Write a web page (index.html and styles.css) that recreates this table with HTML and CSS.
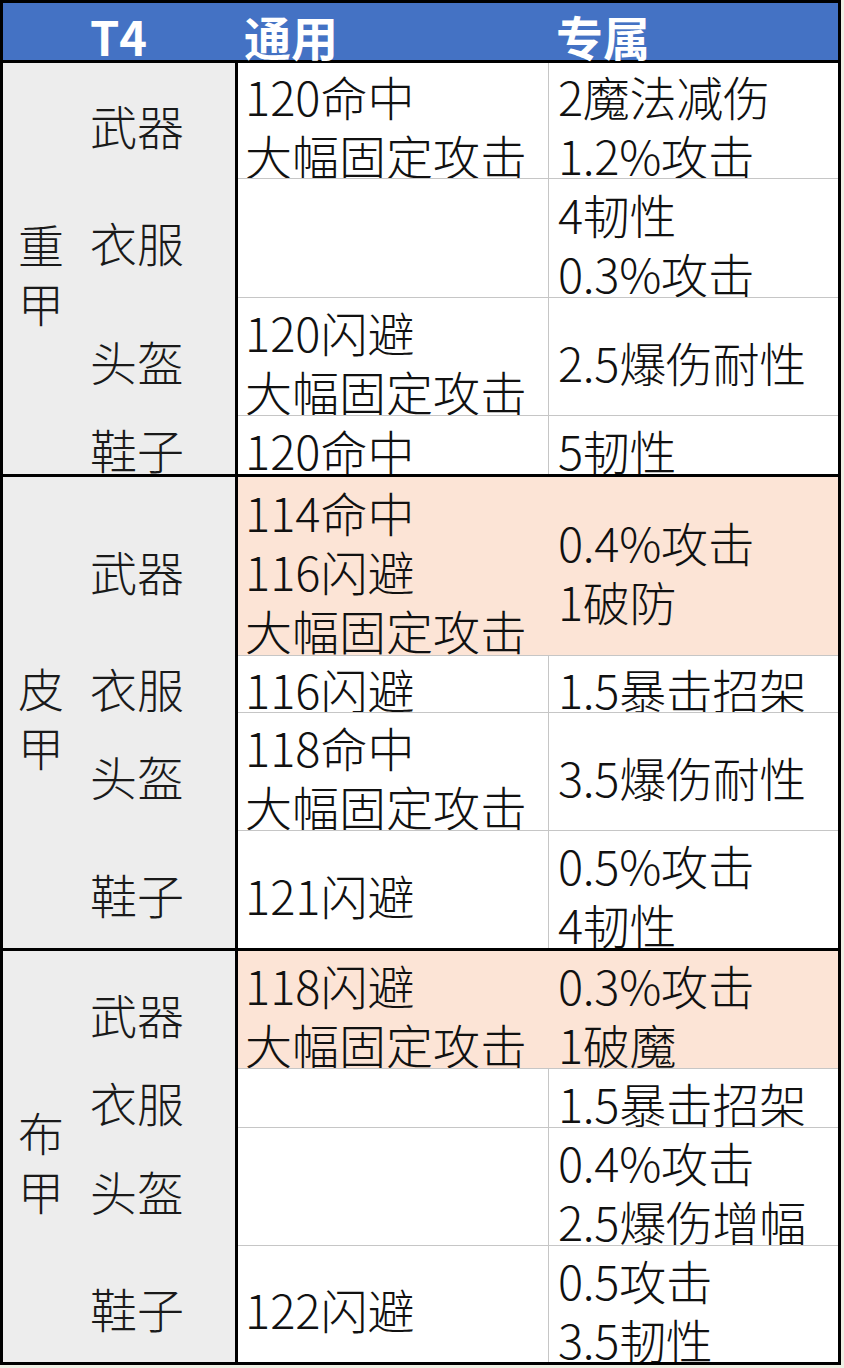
FILE: index.html
```html
<!DOCTYPE html>
<html lang="zh">
<head>
<meta charset="utf-8">
<title>T4</title>
<link rel="stylesheet" href="styles.css">
</head>
<body>
<div class="sheet">
  <div class="header">
    <div class="h h1">T4</div>
    <div class="h h2">通用</div>
    <div class="h h3">专属</div>
  </div>

  <div class="group g1">
    <div class="glabel"><span>重</span><span>甲</span></div>
    <div class="item">武器</div>
    <div class="cell c2 first"><span>120命中</span><span>大幅固定攻击</span></div>
    <div class="cell c3 first"><span>2魔法减伤</span><span>1.2%攻击</span></div>
    <div class="item">衣服</div>
    <div class="cell c2"></div>
    <div class="cell c3"><span>4韧性</span><span>0.3%攻击</span></div>
    <div class="item">头盔</div>
    <div class="cell c2"><span>120闪避</span><span>大幅固定攻击</span></div>
    <div class="cell c3"><span>2.5爆伤耐性</span></div>
    <div class="item">鞋子</div>
    <div class="cell c2"><span>120命中</span></div>
    <div class="cell c3"><span>5韧性</span></div>
  </div>

  <div class="group g2">
    <div class="glabel"><span>皮</span><span>甲</span></div>
    <div class="item">武器</div>
    <div class="cell c2 first hl"><span>114命中</span><span>116闪避</span><span>大幅固定攻击</span></div>
    <div class="cell c3 first hl"><span>0.4%攻击</span><span>1破防</span></div>
    <div class="item">衣服</div>
    <div class="cell c2"><span>116闪避</span></div>
    <div class="cell c3"><span>1.5暴击招架</span></div>
    <div class="item">头盔</div>
    <div class="cell c2"><span>118命中</span><span>大幅固定攻击</span></div>
    <div class="cell c3"><span>3.5爆伤耐性</span></div>
    <div class="item">鞋子</div>
    <div class="cell c2"><span>121闪避</span></div>
    <div class="cell c3"><span>0.5%攻击</span><span>4韧性</span></div>
  </div>

  <div class="group g3">
    <div class="glabel"><span>布</span><span>甲</span></div>
    <div class="item">武器</div>
    <div class="cell c2 first hl"><span>118闪避</span><span>大幅固定攻击</span></div>
    <div class="cell c3 first hl"><span>0.3%攻击</span><span>1破魔</span></div>
    <div class="item">衣服</div>
    <div class="cell c2"></div>
    <div class="cell c3"><span>1.5暴击招架</span></div>
    <div class="item">头盔</div>
    <div class="cell c2"></div>
    <div class="cell c3"><span>0.4%攻击</span><span>2.5爆伤增幅</span></div>
    <div class="item">鞋子</div>
    <div class="cell c2"><span>122闪避</span></div>
    <div class="cell c3"><span>0.5攻击</span><span>3.5韧性</span></div>
  </div>
</div>
</body>
</html>
```

FILE: styles.css
```css
html, body {
  margin: 0;
  padding: 0;
}
body {
  background: #eef0e4;
  font-family: "Noto Sans CJK SC Light", "Noto Sans CJK SC DemiLight", "Noto Sans CJK SC", "Noto Sans", sans-serif;
  color: #111;
}
.sheet {
  width: 841px;
  box-sizing: border-box;
  border: 3px solid #000;
  background: #fff;
}
.header {
  display: grid;
  grid-template-columns: 232px 313px 1fr;
  height: 60px;
  box-sizing: border-box;
  background: #4472c4;
  border-bottom: 3px solid #000;
}
.h {
  color: #fff;
  font-family: "Noto Sans CJK SC", "Noto Sans", sans-serif;
  font-weight: 700;
  font-size: 47px;
  line-height: 57px;
  padding-top: 4px;
  box-sizing: border-box;
  height: 57px;
}
.h1 { padding-left: 87px; }
.h2 { padding-left: 9px; }
.h3 { padding-left: 8px; }

.group {
  display: grid;
  grid-template-columns: 76px 159px 311px 1fr;
  border-bottom: 3px solid #000;
}
.g3 { border-bottom: none; }
.g1 { grid-template-rows: 115px 119px 118px 59px; }
.g2 { grid-template-rows: 178px 57px 118px 118px; }
.g3 { grid-template-rows: 117px 59px 118px 117px; }

.glabel {
  grid-column: 1;
  grid-row: 1 / -1;
  background: #ededed;
  display: flex;
  flex-direction: column;
  align-items: center;
  justify-content: center;
  padding-top: 8px;
  font-size: 46px;
  line-height: 59px;
  font-weight: 300;
  color: #1a1a1a;
}
.item {
  grid-column: 2;
  background: #ededed;
  border-right: 3px solid #000;
  box-sizing: border-box;
  display: flex;
  align-items: center;
  padding-left: 11px;
  padding-top: 8px;
  font-size: 47px;
  font-weight: 300;
  color: #1a1a1a;
}
.cell {
  box-sizing: border-box;
  display: flex;
  flex-direction: column;
  justify-content: center;
  overflow: hidden;
  padding-top: 9px;
  font-size: 47px;
  line-height: 59px;
  font-weight: 300;
  white-space: nowrap;
  border-top: 1px solid #c6c6c6;
}
.cell.first { border-top: none; }
.cell span { display: block; flex: none; }
.c2 {
  grid-column: 3;
  padding-left: 7px;
  border-right: 1px solid #c6c6c6;
}
.c3 {
  grid-column: 4;
  padding-left: 9px;
  letter-spacing: -0.3px;
}
.hl { background: #fce4d6; }
.c2.hl { border-right-color: #fce4d6; }
```
